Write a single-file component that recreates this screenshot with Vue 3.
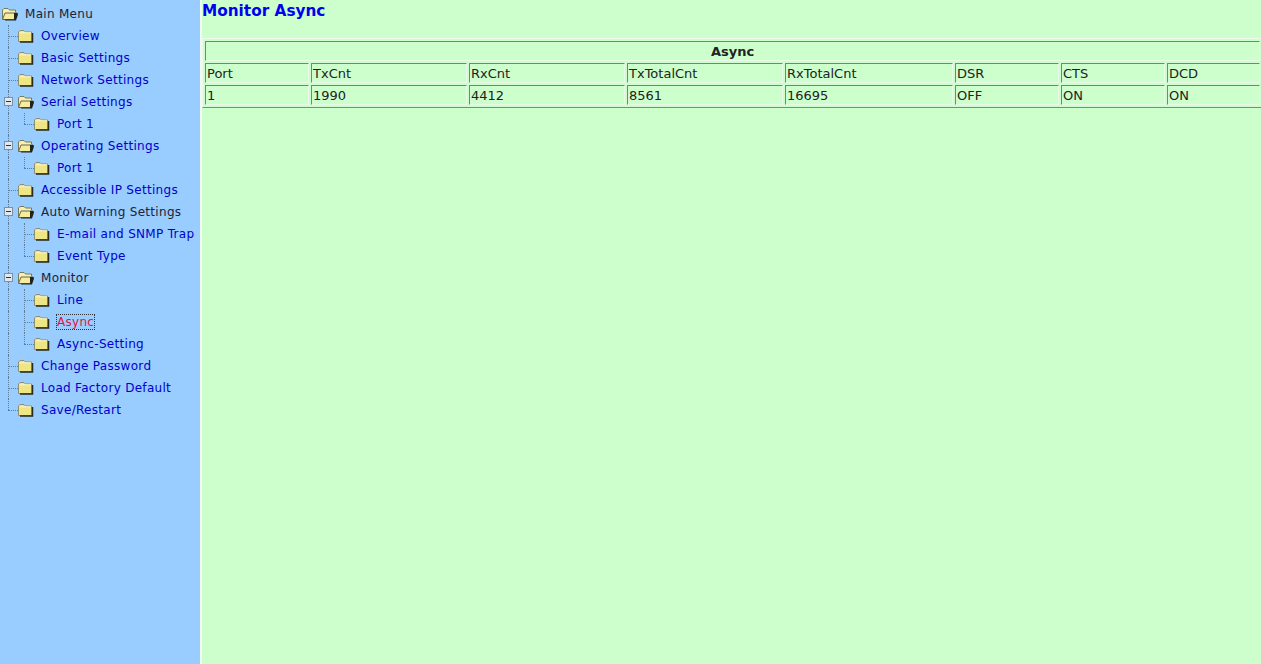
<template>
  <div class="page">
    <aside class="side">
      <div v-for="(r, i) in rows" :key="i" class="row">
        <span v-for="(g, j) in r.guides" :key="j" class="cell" :class="g"></span>
        <span v-if="r.minus" class="minus"></span>
        <svg v-if="r.open" class="folder" width="16" height="14" viewBox="0 0 16 14">
          <path d="M0.5 12V3L2 1.5h4L7.5 3h6v2" fill="#f6f1b0" stroke="#77775c"/>
          <path d="M0.5 12.5 3 6h12l-2.5 6.5z" fill="#f5ed9c" stroke="#66664a"/>
          <path d="M12 6h3.5L16 7.5l-2 6H3v-1h9z" fill="#23231a"/>
        </svg>
        <svg v-else class="folder" width="16" height="14" viewBox="0 0 16 14">
          <path d="M0.5 12.5V3L2 1.5h4L7.5 3h6v9.5z" fill="#eee585" stroke="#8f8f70"/>
          <path d="M1.5 3.8h11.5" stroke="#fbf7cc"/>
          <path d="M14.5 4v9H2" fill="none" stroke="#2a2a1e" stroke-width="1.5"/>
        </svg>
        <span class="lbl" :class="{ plain: r.plain, active: r.active }">{{ r.text }}</span>
      </div>
    </aside>
    <main class="main">
      <h1 class="title">Monitor Async</h1>
      <table class="grid">
        <colgroup>
          <col v-for="w in widths" :key="w.k" :style="{ width: w.v + 'px' }" />
        </colgroup>
        <tbody>
          <tr><th colspan="8">Async</th></tr>
          <tr><td v-for="h in heads" :key="h">{{ h }}</td></tr>
          <tr><td v-for="(v, i) in values" :key="i">{{ v }}</td></tr>
        </tbody>
      </table>
    </main>
  </div>
</template>

<script setup>
const rows = [
  { text: 'Main Menu', guides: [], open: true, plain: true },
  { text: 'Overview', guides: ['join'] },
  { text: 'Basic Settings', guides: ['join'] },
  { text: 'Network Settings', guides: ['join'] },
  { text: 'Serial Settings', guides: ['trunk'], minus: true, open: true },
  { text: 'Port 1', guides: ['trunk', 'end'] },
  { text: 'Operating Settings', guides: ['trunk'], minus: true, open: true },
  { text: 'Port 1', guides: ['trunk', 'end'] },
  { text: 'Accessible IP Settings', guides: ['join'] },
  { text: 'Auto Warning Settings', guides: ['trunk'], minus: true, open: true, plain: true },
  { text: 'E-mail and SNMP Trap', guides: ['trunk', 'join'] },
  { text: 'Event Type', guides: ['trunk', 'end'] },
  { text: 'Monitor', guides: ['trunk'], minus: true, open: true, plain: true },
  { text: 'Line', guides: ['trunk', 'join'] },
  { text: 'Async', guides: ['trunk', 'join'], active: true },
  { text: 'Async-Setting', guides: ['trunk', 'end'] },
  { text: 'Change Password', guides: ['join'] },
  { text: 'Load Factory Default', guides: ['join'] },
  { text: 'Save/Restart', guides: ['end'] },
]

const widths = [104, 156, 156, 156, 168, 104, 104, 93].map((v, k) => ({ k, v }))
const heads = ['Port', 'TxCnt', 'RxCnt', 'TxTotalCnt', 'RxTotalCnt', 'DSR', 'CTS', 'DCD']
const values = ['1', '1990', '4412', '8561', '16695', 'OFF', 'ON', 'ON']
</script>

<style scoped>
.page { display: flex; height: 664px; overflow: hidden; font-family: "DejaVu Sans", Verdana, sans-serif; font-size: 12px; }
.side { width: 200px; flex-shrink: 0; padding-top: 3px; height: 661px; background: #99ccff; border-right: 2px solid #f2f8f2; }
.row { position: relative; display: flex; align-items: center; height: 22px; padding-left: 2px; white-space: nowrap; }
.row:has(.cell) { padding-left: 0; }
.cell { position: relative; width: 16px; height: 22px; flex-shrink: 0; }
.trunk::before, .join::before, .end::before { content: ""; position: absolute; left: 8px; top: 0; width: 0; border-left: 1px dotted #5c7c9c; }
.trunk::before, .join::before { height: 22px; }
.end::before { height: 11px; }
.join::after, .end::after { content: ""; position: absolute; left: 8px; top: 11px; width: 10px; border-top: 1px dotted #5c7c9c; }
.minus { position: absolute; left: 4px; top: 6px; width: 7px; height: 7px; background: #dfe8f0; border: 1px solid #7f8f9f; }
.minus::after { content: ""; position: absolute; left: 1px; top: 3px; width: 5px; height: 1px; background: #333; }
.folder { display: block; flex-shrink: 0; margin-left: 2px; }
.row:not(:has(.cell)) .folder { margin-left: 0; }
.lbl { margin-left: 7px; color: #0000cc; letter-spacing: 0.025em; line-height: 14px; }
.lbl.plain { color: #222233; }
.lbl.active { color: #e8103c; outline: 1px dotted #333; }
.main { flex: 1; min-width: 0; overflow: hidden; background: #ccffcc; }
.title { margin: 1px 0 17px; font-size: 15.3px; line-height: 20px; font-weight: bold; color: #0000ee; }
.grid { table-layout: fixed; width: 1061px; border-collapse: separate; border-spacing: 2px; border: 1px solid; border-color: #eef8ee #808880 #808880 #eef8ee; font-size: 13px; color: #222; }
.grid th, .grid td { box-sizing: content-box; height: 16px; padding: 2px 1px 0; border: 1px solid; border-color: #7a827a #eaf8ea #eaf8ea #7a827a; font-weight: normal; text-align: left; line-height: 16px; overflow: hidden; }
.grid th { font-weight: bold; text-align: center; }
</style>
<style>
html, body { margin: 0; overflow: hidden; }
</style>
